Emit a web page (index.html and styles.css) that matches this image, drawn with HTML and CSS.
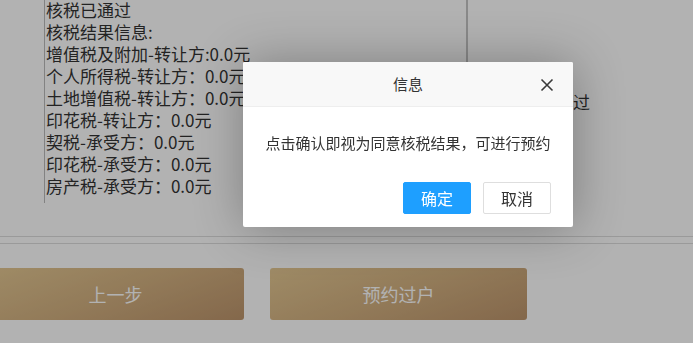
FILE: index.html
```html
<!doctype html>
<html lang="zh-CN">
<head>
  <meta charset="UTF-8">
  <title>核税结果</title>
  <link rel="stylesheet" href="styles.css">
</head>
<body>
  <div class="page">
    <div class="result-row">
      <div class="label-cell"></div>
      <div class="content-cell">
        <p>核税已通过</p>
        <p>核税结果信息:</p>
        <p>增值税及附加-转让方:0.0元</p>
        <p>个人所得税-转让方：0.0元</p>
        <p>土地增值税-转让方：0.0元</p>
        <p>印花税-转让方：0.0元</p>
        <p>契税-承受方：0.0元</p>
        <p>印花税-承受方：0.0元</p>
        <p>房产税-承受方：0.0元</p>
      </div>
      <div class="status-cell">核税已通过</div>
    </div>

    <div class="divider"></div>

    <div class="actions">
      <a href="javascript:;" class="btn-gold">上一步</a>
      <a href="javascript:;" class="btn-gold">预约过户</a>
    </div>
  </div>

  <!-- 弹层 -->
  <div class="layer-shade"></div>
  <div class="layer">
    <div class="layer-title">
      信息
      <a href="javascript:;" class="layer-close">
        <svg width="14" height="14" viewBox="0 0 14 14">
          <path d="M1.5 1.5L12.5 12.5M12.5 1.5L1.5 12.5" stroke="#3a3a3a" stroke-width="1.6" fill="none"/>
        </svg>
      </a>
    </div>
    <div class="layer-content">点击确认即视为同意核税结果，可进行预约</div>
    <div class="layer-btns">
      <a href="javascript:;" class="btn-ok">确定</a>
      <a href="javascript:;" class="btn-cancel">取消</a>
    </div>
  </div>
</body>
</html>
```

FILE: styles.css
```css
html, body, p {
  margin: 0;
  padding: 0;
}

body {
  background: #fff;
  color: #333;
  font-family: "Noto Sans CJK SC", "Noto Sans", sans-serif;
  overflow: hidden;
}

a {
  text-decoration: none;
}

.page {
  width: 693px;
}

.result-row {
  display: flex;
  margin-top: -1px;
}

.label-cell {
  width: 44px;
  flex: none;
}

.content-cell {
  width: 422px;
  flex: none;
  border-left: 1px solid #bbb;
  padding: 0 0 6px 1px;
  box-sizing: border-box;
  font-size: 17px;
  line-height: 22px;
  color: #333;
}

.status-cell {
  flex: 1;
  border-left: 2px solid #c4c4c4;
  display: flex;
  align-items: center;
  padding-left: 37px;
  font-size: 17px;
  color: #333;
}

.divider {
  margin-top: 33px;
  height: 6px;
  border-top: 1px solid #ddd;
  border-bottom: 1px solid #ddd;
}

.actions {
  display: flex;
  gap: 26px;
  margin: 24px 0 0 -13px;
}

.btn-gold {
  width: 257px;
  height: 52px;
  line-height: 52px;
  text-align: center;
  font-size: 18px;
  color: #fff;
  border-radius: 3px;
  background: linear-gradient(160deg, #e4c893 0%, #d2b080 50%, #bd956c 100%);
}

/* 遮罩 */
.layer-shade {
  position: fixed;
  left: 0;
  top: 0;
  width: 100%;
  height: 100%;
  background: rgba(0, 0, 0, 0.3);
}

.layer {
  position: absolute;
  left: 243px;
  top: 62px;
  width: 330px;
  background: #fff;
  border-radius: 2px;
  box-shadow: 1px 1px 50px rgba(0, 0, 0, 0.3);
}

.layer-title {
  position: relative;
  height: 44px;
  line-height: 44px;
  text-align: center;
  font-size: 15px;
  color: #333;
  background: #f8f8f8;
  border-bottom: 1px solid #eee;
  border-radius: 2px 2px 0 0;
}

.layer-close {
  position: absolute;
  right: 19px;
  top: 16px;
  width: 14px;
  height: 14px;
  line-height: 0;
}

.layer-content {
  padding: 24px 20px;
  line-height: 24px;
  font-size: 15px;
  text-align: center;
  color: #333;
}

.layer-btns {
  display: flex;
  justify-content: flex-end;
  gap: 12px;
  padding: 3px 22px 13px;
}

.layer-btns a {
  width: 68px;
  height: 32px;
  line-height: 30px;
  box-sizing: border-box;
  text-align: center;
  font-size: 16px;
  border-radius: 2px;
}

.btn-ok {
  background: #1e9fff;
  border: 1px solid #1e9fff;
  color: #fff;
}

.btn-cancel {
  background: #fff;
  border: 1px solid #dedede;
  color: #333;
}
```
